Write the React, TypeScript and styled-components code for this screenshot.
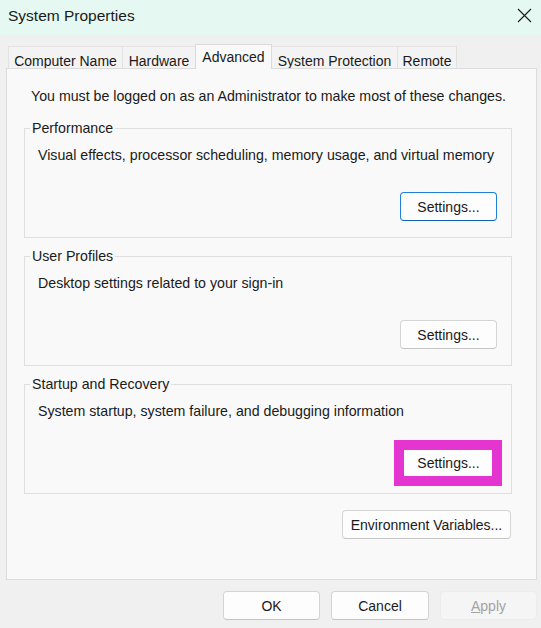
import React from 'react';
import styled, { createGlobalStyle, css } from 'styled-components';

const GlobalStyle = createGlobalStyle`
  * {
    box-sizing: border-box;
  }

  html, body {
    margin: 0;
    padding: 0;
    background: #f0f0f0;
  }

  body {
    font-family: 'Liberation Sans', Arial, sans-serif;
    font-size: 14.2px;
    color: #1a1a1a;
  }
`;

const Window = styled.div`
  width: 541px;
  height: 100vh;
  display: flex;
  flex-direction: column;
  background: #f0f0f0;
`;

const TitleBar = styled.div`
  height: 35px;
  flex: none;
  display: flex;
  justify-content: space-between;
  align-items: flex-start;
  padding: 7px 9px 0 8px;
  background: #e6f8f2;
`;

const Title = styled.div`
  font-size: 15.5px;
  line-height: 18px;
  color: #1a1a1a;
`;

const CloseButton = styled.button`
  width: 16px;
  height: 16px;
  padding: 0;
  border: none;
  background: transparent;
  display: flex;
  align-items: center;
  justify-content: center;
`;

const TabStrip = styled.div`
  display: flex;
  align-items: flex-end;
  height: 24px;
  margin-top: 9px;
  padding-left: 8px;
`;

const Tab = styled.div<{ $active?: boolean; $width: number }>`
  width: ${p => p.$width}px;
  height: 22px;
  padding-top: 6px;
  margin-right: -1px;
  border: 1px solid #e2e2e2;
  border-bottom: none;
  background: #f3f3f3;
  font-size: 14px;
  line-height: 16px;
  text-align: center;
  white-space: nowrap;

  ${p => p.$active && css`
    position: relative;
    z-index: 1;
    height: 25px;
    margin-bottom: -1px;
    padding-top: 4px;
    border-color: #dadada;
    background: #f9f9f9;
  `}
`;

const Panel = styled.div`
  flex: 1;
  margin: 0 4px 0 6px;
  padding: 19px 24px 0 17px;
  border: 1px solid #dcdcdc;
  background: #f9f9f9;
  display: flex;
  flex-direction: column;
`;

const Notice = styled.p`
  margin: 0 0 16px 7px;
  line-height: 16px;
`;

const Group = styled.fieldset`
  margin: 0 0 10px;
  padding: 10px 14px 16px 13px;
  min-width: 0;
  border: 1px solid #dfdfdf;
  display: flex;
  flex-direction: column;
`;

const GroupLegend = styled.legend`
  margin-left: -8px;
  padding: 0 2px;
  line-height: 17px;
`;

const GroupText = styled.div`
  line-height: 16px;
  margin-bottom: 29px;
`;

const ActionRow = styled.div<{ $offset?: number; $inset?: number }>`
  display: flex;
  justify-content: flex-end;
  margin-top: ${p => p.$offset ?? 0}px;
  padding-right: ${p => p.$inset ?? 0}px;
`;

const PushButton = styled.button<{ $width: number; $focused?: boolean; $marked?: boolean }>`
  position: relative;
  width: ${p => p.$width}px;
  height: 29px;
  padding: 0;
  border: 1px solid #d4d4d4;
  border-bottom-color: #c4c4c4;
  border-radius: 4px;
  background: #fdfdfd;
  font-family: inherit;
  font-size: 14px;
  color: #1a1a1a;

  ${p => p.$focused && css`
    border-color: #1f7fd8;
    border-bottom-color: #0f62b5;
  `}

  /* highlight frame drawn over the button edges */
  ${p => p.$marked && css`
    &::after {
      content: '';
      position: absolute;
      top: -9px;
      right: -6px;
      bottom: -10px;
      left: -7px;
      border: 10px solid #e535d0;
    }
  `}

  &:disabled {
    background: #f5f5f5;
    border-color: #ececec;
    color: #a3a3a3;
  }
`;

const Footer = styled.div`
  flex: none;
  display: flex;
  justify-content: flex-end;
  gap: 11px;
  padding: 11px 4px 8px 0;
`;

const tabs = [
  { label: 'Computer Name', width: 115 },
  { label: 'Hardware', width: 74 },
  { label: 'Advanced', width: 77, active: true },
  { label: 'System Protection', width: 127 },
  { label: 'Remote', width: 60 },
];

const groups = [
  { title: 'Performance', text: 'Visual effects, processor scheduling, memory usage, and virtual memory', focused: true },
  { title: 'User Profiles', text: 'Desktop settings related to your sign-in' },
  { title: 'Startup and Recovery', text: 'System startup, system failure, and debugging information', marked: true },
];

const CloseIcon = () => (
  <svg width="15" height="15" viewBox="0 0 15 15">
    <path d="M1 1 L14 14 M14 1 L1 14" stroke="#1a1a1a" strokeWidth="1.1" fill="none" />
  </svg>
);

export default function App() {
  return (
    <>
      <GlobalStyle />
      <Window>
        <TitleBar>
          <Title>System Properties</Title>
          <CloseButton aria-label="Close">
            <CloseIcon />
          </CloseButton>
        </TitleBar>

        <TabStrip>
          {tabs.map(t => (
            <Tab key={t.label} $active={t.active} $width={t.width}>
              {t.label}
            </Tab>
          ))}
        </TabStrip>

        <Panel>
          <Notice>You must be logged on as an Administrator to make most of these changes.</Notice>

          {groups.map(g => (
            <Group key={g.title}>
              <GroupLegend>{g.title}</GroupLegend>
              <GroupText>{g.text}</GroupText>
              <ActionRow>
                <PushButton $width={97} $focused={g.focused} $marked={g.marked}>
                  Settings...
                </PushButton>
              </ActionRow>
            </Group>
          ))}

          <ActionRow $offset={6} $inset={1}>
            <PushButton $width={169}>Environment Variables...</PushButton>
          </ActionRow>
        </Panel>

        <Footer>
          <PushButton $width={97}>OK</PushButton>
          <PushButton $width={98}>Cancel</PushButton>
          <PushButton $width={97} disabled>
            <u>A</u>pply
          </PushButton>
        </Footer>
      </Window>
    </>
  );
}
